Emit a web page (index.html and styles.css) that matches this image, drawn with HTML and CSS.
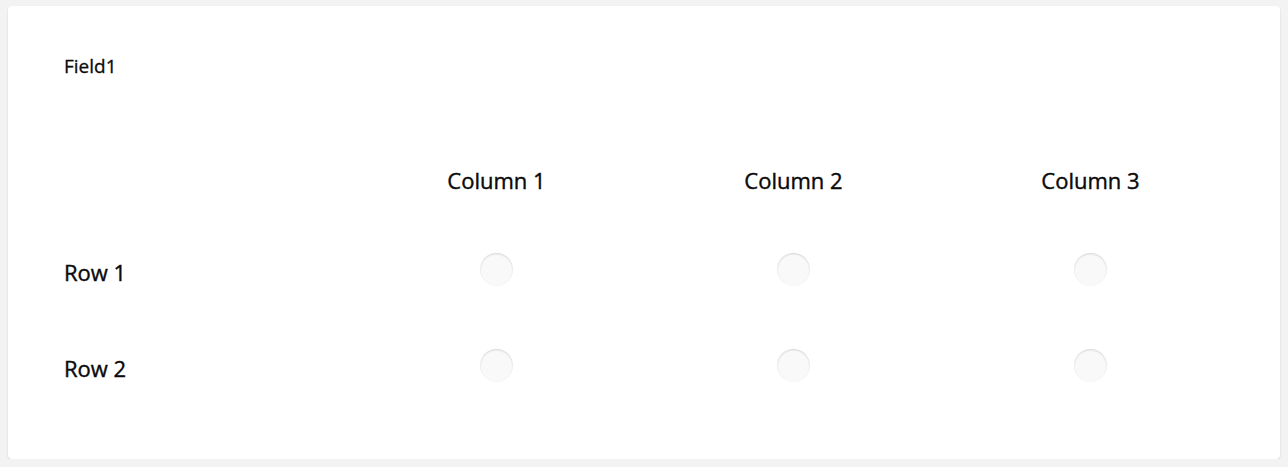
FILE: index.html
```
<!DOCTYPE html>
<html>
<head>
<meta charset="utf-8">
<link rel="stylesheet" href="styles.css">
</head>
<body>
<div class="card">
  <div class="title">Field1</div>
  <div class="matrix">
    <div class="cell"></div>
    <div class="cell head">Column 1</div>
    <div class="cell head">Column 2</div>
    <div class="cell head">Column 3</div>
    <div class="cell label">Row 1</div>
    <div class="cell"><span class="radio"></span></div>
    <div class="cell"><span class="radio"></span></div>
    <div class="cell"><span class="radio"></span></div>
    <div class="cell label">Row 2</div>
    <div class="cell"><span class="radio"></span></div>
    <div class="cell"><span class="radio"></span></div>
    <div class="cell"><span class="radio"></span></div>
  </div>
</div>
</body>
</html>
```
FILE: styles.css
```
html, body { margin: 0; padding: 0; }
body {
  background: #f3f3f3;
  font-family: "Open Sans", sans-serif;
  color: #0a0a0a;
  padding: 6px 8px 0 8px;
}
.card {
  background: #fff;
  border-radius: 4px;
  box-shadow: 0 1px 2px rgba(0,0,0,0.15);
  height: 453px;
  box-sizing: border-box;
  padding: 48px 56px 0 56px;
}
.title {
  font-size: 19px;
  font-weight: 400;
  line-height: 24px;
  -webkit-text-stroke: 0.3px #0a0a0a;
}
.matrix {
  margin-top: 70px;
  display: grid;
  grid-template-columns: 284px repeat(3, 297px);
  grid-template-rows: 76px 96px 96px;
}
.cell {
  display: flex;
  align-items: center;
  justify-content: center;
}
.head {
  font-size: 22px;
  font-weight: 400;
  line-height: 30px;
  margin-bottom: 12px;
  -webkit-text-stroke: 0.4px #0a0a0a;
}
.label {
  justify-content: flex-start;
  font-size: 22px;
  font-weight: 400;
  line-height: 30px;
  -webkit-text-stroke: 0.4px #0a0a0a;
}
.radio {
  width: 33px;
  height: 33px;
  margin-bottom: 6px;
  border-radius: 50%;
  background: #f9f9f9;
  box-shadow: inset 0 1px 2px rgba(0,0,0,0.15);
}
```
